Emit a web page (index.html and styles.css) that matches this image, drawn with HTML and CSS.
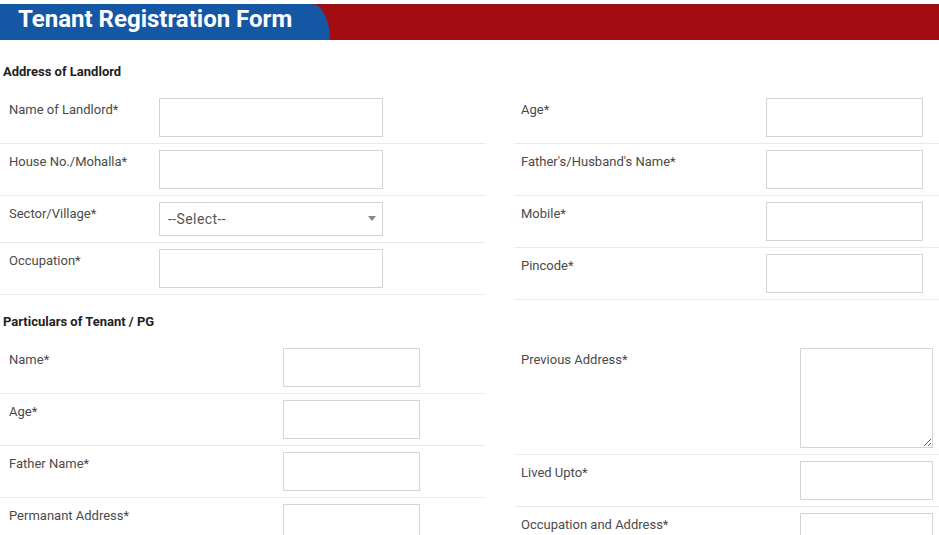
FILE: index.html
```html
<!DOCTYPE html>
<html>
<head>
    <meta charset="UTF-8">
    <title>Tenant Registration Form</title>
    <link rel="stylesheet" href="styles.css">
</head>
<body>

<div class="banner">
    <div class="banner-tab">
        <h1>Tenant Registration Form</h1>
    </div>
</div>

<div class="section first">
    <h4>Address of Landlord</h4>
    <div class="columns landlord">
        <div class="col">
            <div class="row">
                <label>Name of Landlord*</label>
                <input type="text">
            </div>
            <div class="row">
                <label>House No./Mohalla*</label>
                <input type="text">
            </div>
            <div class="row">
                <label>Sector/Village*</label>
                <div class="select-wrap">
                    <select>
                        <option>--Select--</option>
                    </select>
                </div>
            </div>
            <div class="row">
                <label>Occupation*</label>
                <input type="text">
            </div>
        </div>
        <div class="col">
            <div class="row">
                <label>Age*</label>
                <input type="text">
            </div>
            <div class="row">
                <label>Father's/Husband's Name*</label>
                <input type="text">
            </div>
            <div class="row">
                <label>Mobile*</label>
                <input type="text">
            </div>
            <div class="row">
                <label>Pincode*</label>
                <input type="text">
            </div>
        </div>
    </div>
</div>

<div class="section">
    <h4>Particulars of Tenant / PG</h4>
    <div class="columns tenant">
        <div class="col">
            <div class="row">
                <label>Name*</label>
                <input type="text">
            </div>
            <div class="row">
                <label>Age*</label>
                <input type="text">
            </div>
            <div class="row">
                <label>Father Name*</label>
                <input type="text">
            </div>
            <div class="row">
                <label>Permanant Address*</label>
                <input type="text">
            </div>
        </div>
        <div class="col">
            <div class="row">
                <label>Previous Address*</label>
                <textarea></textarea>
            </div>
            <div class="row">
                <label>Lived Upto*</label>
                <input type="text">
            </div>
            <div class="row">
                <label>Occupation and Address*</label>
                <input type="text">
            </div>
        </div>
    </div>
</div>

</body>
</html>
```

FILE: styles.css
```css
body {
    margin: 0;
    font-family: Roboto, "Open Sans", sans-serif;
    color: #444;
    background: #fff;
}
.banner {
    margin-top: 4px;
    height: 36px;
    background-color: #a20c12;
    border-top: 1px solid #8e1016;
    box-sizing: border-box;
}
.banner-tab {
    width: 330px;
    height: 36px;
    margin-top: -1px;
    background-color: #1457a5;
    border-top-right-radius: 18px 36px;
}
.banner-tab h1 {
    margin: 0;
    padding-left: 18px;
    font-size: 24px;
    line-height: 30px;
    font-weight: bold;
    color: #fff;
}
.section.first {
    margin-top: 10px;
}
.section h4 {
    margin: 0;
    padding: 12px 3px 10px;
    font-size: 13px;
    line-height: 20px;
    font-weight: bold;
    color: #222;
}
.columns {
    display: grid;
    grid-template-columns: 485px 1fr;
    column-gap: 30px;
}
.row {
    display: flex;
    align-items: flex-start;
    padding: 6px 0 6px 9px;
    border-bottom: 1px solid #e9e9e9;
}
.col + .col .row {
    padding-left: 6px;
}
label {
    padding-top: 1px;
    font-size: 13px;
    line-height: 22px;
    color: #4a4a4a;
}
input, textarea, select {
    box-sizing: border-box;
    height: 39px;
    border: 1px solid #d4d4d4;
    background: #fff;
    margin: 0;
    font-family: inherit;
}
textarea {
    height: 100px;
    resize: both;
}
.select-wrap {
    position: relative;
}
select {
    -webkit-appearance: none;
    appearance: none;
    height: 34px;
    padding-left: 8px;
    font-size: 14px;
    letter-spacing: 0.4px;
    color: #555;
    border-radius: 0;
}
.select-wrap::after {
    content: "";
    position: absolute;
    right: 7px;
    top: 14px;
    border-left: 4px solid transparent;
    border-right: 4px solid transparent;
    border-top: 5px solid #888;
}

/* landlord section */
.landlord .col:first-child label { width: 150px; }
.landlord .col:first-child input,
.landlord select { width: 224px; }
.landlord .col + .col label { width: 245px; }
.landlord .col + .col input { width: 157px; }

/* tenant section */
.tenant .col:first-child label { width: 274px; }
.tenant .col:first-child input { width: 137px; }
.tenant .col + .col label { width: 279px; }
.tenant .col + .col input,
.tenant textarea { width: 133px; }
```
